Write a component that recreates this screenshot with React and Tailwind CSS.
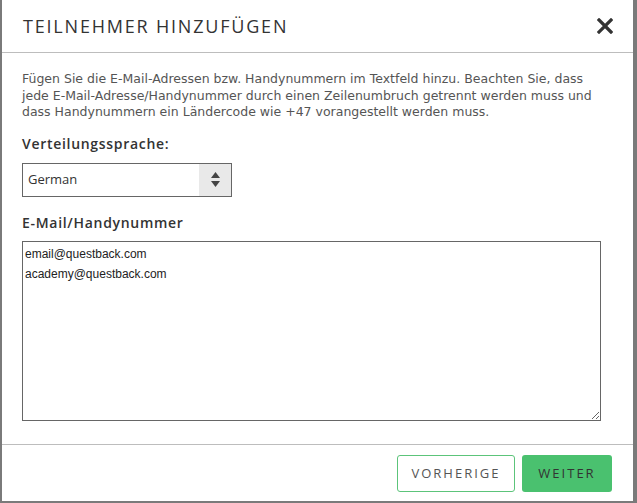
import { useState } from 'react'

const BODY_FONT = { fontFamily: '"Open Sans", "Noto Sans", sans-serif' }

function LanguageSelect({ value }) {
  return (
    <div className="flex h-[34px] w-[210px] items-stretch border border-[#666] bg-white">
      <div className="flex flex-1 items-center pl-[5px] text-[13px] text-[#333]">{value}</div>
      <div className="flex w-[32px] flex-col items-center justify-center gap-[3px] bg-[#e9e9e9]">
        <svg width="9" height="6" viewBox="0 0 9 6"><path d="M4.5 0L9 6H0z" fill="#444" /></svg>
        <svg width="9" height="6" viewBox="0 0 9 6"><path d="M0 0h9L4.5 6z" fill="#444" /></svg>
      </div>
    </div>
  )
}

export default function App() {
  const [emails, setEmails] = useState('email@questback.com\nacademy@questback.com')

  return (
    <div className="relative h-[503px] w-[637px] overflow-hidden bg-[#7a7a7a] pb-[2px] pl-[2px] pr-[4px]" style={BODY_FONT}>
      <div className="flex h-[501px] w-[631px] flex-col bg-white">
        {/* header */}
        <div className="flex h-[53px] shrink-0 items-center justify-between border-b border-[#bdbdbd] pl-[21px] pr-[20px]">
          <h1 className="pt-[1px] text-[18px] tracking-[1.8px] text-[#333]">TEILNEHMER HINZUFÜGEN</h1>
          <button className="text-[#333]">
            <svg width="16" height="16" viewBox="0 0 16 16">
              <path d="M2 2L14 14M14 2L2 14" stroke="#333" strokeWidth="3.2" strokeLinecap="square" />
            </svg>
          </button>
        </div>

        {/* body */}
        <div className="flex-1 pl-[20px] pr-[31px] pt-[18px]">
          <p
            className="whitespace-nowrap text-[12.5px] leading-[16.5px] text-[#555]"
            style={{ fontFamily: '"DejaVu Sans", "Open Sans", sans-serif' }}
          >
            Fügen Sie die E-Mail-Adressen bzw. Handynummern im Textfeld hinzu. Beachten Sie, dass<br />
            jede E-Mail-Adresse/Handynummer durch einen Zeilenumbruch getrennt werden muss und<br />
            dass Handynummern ein Ländercode wie +47 vorangestellt werden muss.
          </p>

          <div className="mt-[12px] text-[14px] font-semibold tracking-[0.7px] text-[#333]">Verteilungssprache:</div>
          <div className="mt-[9px]">
            <LanguageSelect value="German" />
          </div>

          <div className="mt-[15px] text-[14px] font-semibold tracking-[0.7px] text-[#333]">E-Mail/Handynummer</div>
          <textarea
            value={emails}
            onChange={e => setEmails(e.target.value)}
            className="mt-[8px] block h-[180px] w-[579px] border border-[#666] px-[2px] py-[2px] text-[12px] leading-[20px] text-[#222] outline-none"
            style={{ fontFamily: '"Liberation Sans", Arial, sans-serif' }}
          />
        </div>

        {/* footer */}
        <div className="flex h-[57px] shrink-0 items-start justify-end gap-[7px] border-t border-[#bdbdbd] pr-[21px] pt-[10px]">
          <button className="h-[37px] w-[118px] rounded-[3px] border border-[#5cc47a] bg-white text-[13px] tracking-[2px] text-[#555]">
            VORHERIGE
          </button>
          <button className="h-[37px] w-[90px] rounded-[3px] bg-[#4ac16f] text-[13px] tracking-[2px] text-[#333]">
            WEITER
          </button>
        </div>
      </div>
    </div>
  )
}
